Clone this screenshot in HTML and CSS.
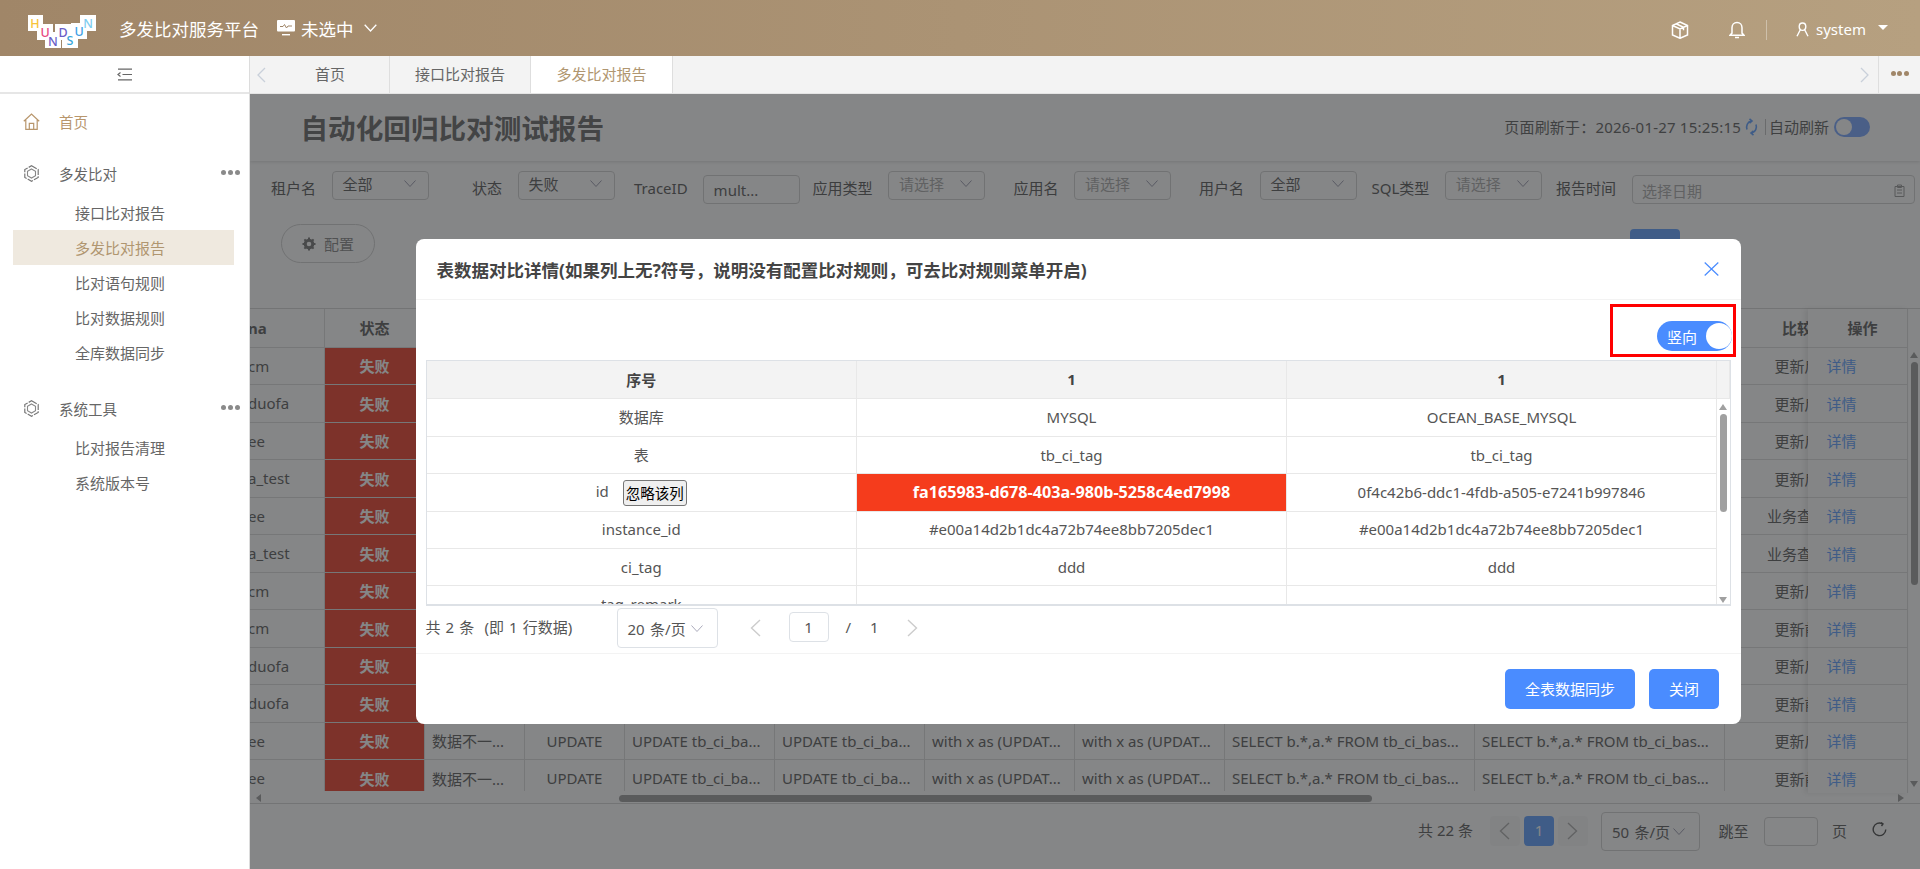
FILE: index.html
```html
<!DOCTYPE html>
<html lang="zh-CN">
<head>
<meta charset="utf-8">
<title>多发比对服务平台</title>
<link rel="stylesheet" href="styles.css">
</head>
<body>
<div class="app">
  <header class="topbar">
    <svg class="logo" viewBox="0 0 68 33" width="68" height="33">
      <g fill="#fff">
        <rect x="0" y="0" width="15" height="16"/><rect x="9" y="9" width="16" height="16"/>
        <rect x="17" y="17" width="16" height="16"/><rect x="27" y="9" width="16" height="16"/>
        <rect x="34" y="17" width="16" height="16"/><rect x="43" y="8" width="16" height="16"/>
        <rect x="52" y="0" width="16" height="16"/>
      </g>
      <g class="logo-l">
        <text x="7" y="12.500" fill="#f8c33a">H</text>
        <text x="17" y="21.500" fill="#e8487f">U</text>
        <text x="25" y="30.500" fill="#6b5fc7" transform="rotate(180 25 26)">N</text>
        <text x="35" y="21.500" fill="#6b5fc7">D</text>
        <text x="42" y="29.500" fill="#39a6d8">S</text>
        <text x="51" y="20.500" fill="#3d9fe6">U</text>
        <text x="60" y="12.500" fill="#7fcdf0">N</text>
      </g>
    </svg>
    <span class="brand">多发比对服务平台</span>
    <svg class="env-ico" viewBox="0 0 18 16" width="18" height="16">
      <rect x="0" y="0" width="18" height="11.5" fill="#fff" rx="1"/>
      <path d="M3 6.500h3l1.500-2 2 3.500 1.500-2h4" fill="none" stroke="#a08668" stroke-width="1"/>
      <rect x="5" y="14" width="8" height="1.400" fill="#fff"/>
    </svg>
    <span class="env">未选中</span>
    <svg class="env-chev" viewBox="0 0 13 8" width="13" height="8"><path d="M.7.7 6.500 7 12.300.7" fill="none" stroke="#fff" stroke-width="1.300"/></svg>
    <div class="top-right">
      <svg viewBox="0 0 18 18" width="18" height="18" class="ti-cube"><path d="M9 1 16.500 4.500V14L9 17.300 1.500 14V4.500ZM1.500 4.500 9 8l7.500-3.500M9 8v9.300M5 2.800 12.500 6.300v3" fill="none" stroke="#fff" stroke-width="1.500"/></svg>
      <svg viewBox="0 0 16 18" width="16" height="18" class="ti-bell"><path d="M8 1.500c-3 0-5 2.200-5 5.200v5.400L1 14.300h14l-2-2.200V6.700c0-3-2-5.200-5-5.200ZM6 16.400h4" fill="none" stroke="#fff" stroke-width="1.500"/></svg>
      <i class="top-sep"></i>
      <svg viewBox="0 0 13 15" width="13" height="15" class="ti-user"><path d="M6.500 1C4.600 1 3.200 2.500 3.200 4.600S4.600 8.400 6.500 8.400 9.800 6.700 9.800 4.600 8.400 1 6.500 1ZM4.200 8 1 14.300M8.800 8 12 14.300" fill="none" stroke="#fff" stroke-width="1.400"/></svg>
      <span class="uname">system</span>
      <i class="caret"></i>
    </div>
  </header>

  <div class="shell">
    <aside class="side">
      <div class="collapse">
        <svg viewBox="0 0 15 13" width="15" height="13"><path d="M1 1.200h14M5.500 6.500H15M1 11.800h14M3.500 4.500 1 6.500l2.500 2" fill="none" stroke="#666" stroke-width="1.200"/></svg>
      </div>
      <nav class="menu">
        <a class="mi home">
          <svg viewBox="0 0 17 17" width="17" height="17"><path d="M.8 8.200 8.500 1l7.700 7.200M2.800 7v9.300h11.400V7M6.300 16.300v-6h4.400v6" fill="none" stroke="#b8966c" stroke-width="1.200"/></svg>
          <span>首页</span>
        </a>
        <div class="group">
          <a class="mi">
            <svg viewBox="0 0 17 17" width="17" height="17"><path d="M8.500.8 15.200 4.600v7.800L8.500 16.200 1.800 12.400V4.600Z" fill="none" stroke="#777" stroke-width="1.200" stroke-dasharray="6 1.200"/><path d="M8.500 4 12.500 6.300v4.400L8.500 13 4.500 10.700V6.300Z" fill="none" stroke="#888" stroke-width="1.100"/></svg>
            <span>多发比对</span>
            <b class="dots"><i></i><i></i><i></i></b>
          </a>
          <a class="sub">接口比对报告</a>
          <a class="sub on">多发比对报告</a>
          <a class="sub">比对语句规则</a>
          <a class="sub">比对数据规则</a>
          <a class="sub">全库数据同步</a>
        </div>
        <div class="group g2">
          <a class="mi">
            <svg viewBox="0 0 17 17" width="17" height="17"><path d="M8.500.8 15.200 4.600v7.800L8.500 16.200 1.800 12.400V4.600Z" fill="none" stroke="#777" stroke-width="1.200" stroke-dasharray="6 1.200"/><path d="M8.500 4 12.500 6.300v4.400L8.500 13 4.500 10.700V6.300Z" fill="none" stroke="#888" stroke-width="1.100"/></svg>
            <span>系统工具</span>
            <b class="dots"><i></i><i></i><i></i></b>
          </a>
          <a class="sub">比对报告清理</a>
          <a class="sub">系统版本号</a>
        </div>
      </nav>
    </aside>

    <main class="main">
      <div class="tabs">
        <span class="tab-arrow"><svg viewBox="0 0 9 16" width="9" height="16"><path d="M8 1 1 8l7 7" fill="none" stroke="#c9d0da" stroke-width="1.300"/></svg></span>
        <a class="tab t1">首页</a>
        <a class="tab t2">接口比对报告</a>
        <a class="tab t3">多发比对报告</a>
        <span class="tab-next"><svg viewBox="0 0 9 16" width="9" height="16"><path d="M1 1l7 7-7 7" fill="none" stroke="#c9d0da" stroke-width="1.300"/></svg></span>
        <span class="tab-more"><i></i><i></i><i></i></span>
      </div>

      <section class="page">
        <div class="title-bar">
          <h1>自动化回归比对测试报告</h1>
          <div class="refresh">
            <span class="ref-time">页面刷新于：2026-01-27 15:25:15</span>
            <svg viewBox="0 0 13 18" width="13" height="18"><path d="M2 11.500C.8 8 2.500 4 6 3M11 6.500C12.200 10 10.500 14 7 15M4.500 .8 7 3 4.500 5.200M8.500 12.800 6 15l2.500 2.200" fill="none" stroke="#79afff" stroke-width="1.600"/></svg>
            <i class="ref-sep"></i>
            <span>自动刷新</span>
            <span class="auto-sw"><i></i></span>
          </div>
        </div>

        <div class="filters">
          <div class="field"><label>租户名</label><span class="sel">全部<svg class="ch" viewBox="0 0 12 7" width="12" height="7"><path d="M.5.500 6 6.500 11.500.5"/></svg></span></div>
          <div class="field"><label>状态</label><span class="sel">失败<svg class="ch" viewBox="0 0 12 7" width="12" height="7"><path d="M.5.500 6 6.500 11.500.5"/></svg></span></div>
          <div class="field"><label>TraceID</label><span class="inp">mult...</span></div>
          <div class="field"><label>应用类型</label><span class="sel ph">请选择<svg class="ch" viewBox="0 0 12 7" width="12" height="7"><path d="M.5.500 6 6.500 11.500.5"/></svg></span></div>
          <div class="field"><label>应用名</label><span class="sel ph">请选择<svg class="ch" viewBox="0 0 12 7" width="12" height="7"><path d="M.5.500 6 6.500 11.500.5"/></svg></span></div>
          <div class="field"><label>用户名</label><span class="sel">全部<svg class="ch" viewBox="0 0 12 7" width="12" height="7"><path d="M.5.500 6 6.500 11.500.5"/></svg></span></div>
          <div class="field"><label>SQL类型</label><span class="sel ph">请选择<svg class="ch" viewBox="0 0 12 7" width="12" height="7"><path d="M.5.500 6 6.500 11.500.5"/></svg></span></div>
          <div class="field"><label>报告时间</label><span class="inp date ph">选择日期<svg viewBox="0 0 11 13" width="11" height="13"><path d="M1 2.500h9v10H1ZM3.500 1h4v2.500h-4ZM3 6h5M3 9h5" fill="none" stroke="#aaa" stroke-width="1"/></svg></span></div>
        </div>

        <div class="actions">
          <span class="cfg"><svg viewBox="0 0 14 14" width="14" height="14"><circle cx="7" cy="7" r="3.800" fill="none" stroke="#8c8c8c" stroke-width="3"/><path d="M7 .5v2M7 11.500v2M.5 7h2M11.500 7h2M2.400 2.400 3.800 3.800M10.200 10.200l1.400 1.400M2.400 11.600l1.400-1.400M10.200 3.800l1.400-1.400" stroke="#8c8c8c" stroke-width="2"/></svg>配置</span>
          <span class="query">查询</span>
        </div>

        <div class="grid-wrap">
          <div class="grid-scroll">
            <table class="grid">
              <colgroup><col class="c1"><col class="c2"><col class="c2"><col class="c2"><col class="c3"><col class="c3"><col class="c3"><col class="c3"><col class="c4"><col class="c4"><col class="c5"></colgroup>
              <thead><tr><th class="lft">na</th><th>状态</th><th>比对结果</th><th>SQL类型</th><th>原始SQL</th><th>比对SQL</th><th>前置SQL</th><th>比对前置SQL</th><th>查询SQL</th><th>比对查询SQL</th><th>比较类型</th></tr></thead>
              <tbody>
                <tr><td class="lft">cm</td><td class="fail">失败</td><td class="l">数据不一...</td><td>UPDATE</td><td class="l">UPDATE tb_ci_ba...</td><td class="l">UPDATE tb_ci_ba...</td><td class="l">with x as (UPDAT...</td><td class="l">with x as (UPDAT...</td><td class="l">SELECT b.*,a.* FROM tb_ci_bas...</td><td class="l">SELECT b.*,a.* FROM tb_ci_bas...</td><td>更新后数据</td></tr>
                <tr><td class="lft">duofa</td><td class="fail">失败</td><td class="l">数据不一...</td><td>UPDATE</td><td class="l">UPDATE tb_ci_ba...</td><td class="l">UPDATE tb_ci_ba...</td><td class="l">with x as (UPDAT...</td><td class="l">with x as (UPDAT...</td><td class="l">SELECT b.*,a.* FROM tb_ci_bas...</td><td class="l">SELECT b.*,a.* FROM tb_ci_bas...</td><td>更新后数据</td></tr>
                <tr><td class="lft">ee</td><td class="fail">失败</td><td class="l">数据不一...</td><td>UPDATE</td><td class="l">UPDATE tb_ci_ba...</td><td class="l">UPDATE tb_ci_ba...</td><td class="l">with x as (UPDAT...</td><td class="l">with x as (UPDAT...</td><td class="l">SELECT b.*,a.* FROM tb_ci_bas...</td><td class="l">SELECT b.*,a.* FROM tb_ci_bas...</td><td>更新后数据</td></tr>
                <tr><td class="lft">a_test</td><td class="fail">失败</td><td class="l">数据不一...</td><td>UPDATE</td><td class="l">UPDATE tb_ci_ba...</td><td class="l">UPDATE tb_ci_ba...</td><td class="l">with x as (UPDAT...</td><td class="l">with x as (UPDAT...</td><td class="l">SELECT b.*,a.* FROM tb_ci_bas...</td><td class="l">SELECT b.*,a.* FROM tb_ci_bas...</td><td>更新后数据</td></tr>
                <tr><td class="lft">ee</td><td class="fail">失败</td><td class="l">数据不一...</td><td>SELECT</td><td class="l">SELECT * FROM tb...</td><td class="l">SELECT * FROM tb...</td><td class="l">-</td><td class="l">-</td><td class="l">SELECT b.*,a.* FROM tb_ci_bas...</td><td class="l">SELECT b.*,a.* FROM tb_ci_bas...</td><td>业务查询数据</td></tr>
                <tr><td class="lft">a_test</td><td class="fail">失败</td><td class="l">数据不一...</td><td>SELECT</td><td class="l">SELECT * FROM tb...</td><td class="l">SELECT * FROM tb...</td><td class="l">-</td><td class="l">-</td><td class="l">SELECT b.*,a.* FROM tb_ci_bas...</td><td class="l">SELECT b.*,a.* FROM tb_ci_bas...</td><td>业务查询数据</td></tr>
                <tr><td class="lft">cm</td><td class="fail">失败</td><td class="l">数据不一...</td><td>UPDATE</td><td class="l">UPDATE tb_ci_ba...</td><td class="l">UPDATE tb_ci_ba...</td><td class="l">with x as (UPDAT...</td><td class="l">with x as (UPDAT...</td><td class="l">SELECT b.*,a.* FROM tb_ci_bas...</td><td class="l">SELECT b.*,a.* FROM tb_ci_bas...</td><td>更新后数据</td></tr>
                <tr><td class="lft">cm</td><td class="fail">失败</td><td class="l">数据不一...</td><td>UPDATE</td><td class="l">UPDATE tb_ci_ba...</td><td class="l">UPDATE tb_ci_ba...</td><td class="l">with x as (UPDAT...</td><td class="l">with x as (UPDAT...</td><td class="l">SELECT b.*,a.* FROM tb_ci_bas...</td><td class="l">SELECT b.*,a.* FROM tb_ci_bas...</td><td>更新前数据</td></tr>
                <tr><td class="lft">duofa</td><td class="fail">失败</td><td class="l">数据不一...</td><td>UPDATE</td><td class="l">UPDATE tb_ci_ba...</td><td class="l">UPDATE tb_ci_ba...</td><td class="l">with x as (UPDAT...</td><td class="l">with x as (UPDAT...</td><td class="l">SELECT b.*,a.* FROM tb_ci_bas...</td><td class="l">SELECT b.*,a.* FROM tb_ci_bas...</td><td>更新后数据</td></tr>
                <tr><td class="lft">duofa</td><td class="fail">失败</td><td class="l">数据不一...</td><td>UPDATE</td><td class="l">UPDATE tb_ci_ba...</td><td class="l">UPDATE tb_ci_ba...</td><td class="l">with x as (UPDAT...</td><td class="l">with x as (UPDAT...</td><td class="l">SELECT b.*,a.* FROM tb_ci_bas...</td><td class="l">SELECT b.*,a.* FROM tb_ci_bas...</td><td>更新前数据</td></tr>
                <tr><td class="lft">ee</td><td class="fail">失败</td><td class="l">数据不一...</td><td>UPDATE</td><td class="l">UPDATE tb_ci_ba...</td><td class="l">UPDATE tb_ci_ba...</td><td class="l">with x as (UPDAT...</td><td class="l">with x as (UPDAT...</td><td class="l">SELECT b.*,a.* FROM tb_ci_bas...</td><td class="l">SELECT b.*,a.* FROM tb_ci_bas...</td><td>更新后数据</td></tr>
                <tr><td class="lft">ee</td><td class="fail">失败</td><td class="l">数据不一...</td><td>UPDATE</td><td class="l">UPDATE tb_ci_ba...</td><td class="l">UPDATE tb_ci_ba...</td><td class="l">with x as (UPDAT...</td><td class="l">with x as (UPDAT...</td><td class="l">SELECT b.*,a.* FROM tb_ci_bas...</td><td class="l">SELECT b.*,a.* FROM tb_ci_bas...</td><td>更新前数据</td></tr>
              </tbody>
            </table>
          </div>
          <div class="grid-fixed">
            <table class="grid ops">
              <thead><tr><th>操作</th></tr></thead>
              <tbody>
                <tr><td><a>详情</a></td></tr><tr><td><a>详情</a></td></tr><tr><td><a>详情</a></td></tr><tr><td><a>详情</a></td></tr>
                <tr><td><a>详情</a></td></tr><tr><td><a>详情</a></td></tr><tr><td><a>详情</a></td></tr><tr><td><a>详情</a></td></tr>
                <tr><td><a>详情</a></td></tr><tr><td><a>详情</a></td></tr><tr><td><a>详情</a></td></tr><tr><td><a>详情</a></td></tr>
              </tbody>
            </table>
          </div>
          <div class="vbar">
            <i class="up"></i><i class="thumb"></i><i class="down"></i>
          </div>
        </div>
        <div class="hbar"><i class="la"></i><i class="hthumb"></i><i class="ra"></i></div>

        <div class="pager">
          <span class="total">共 22 条</span>
          <span class="pg"><svg viewBox="0 0 11 18" width="11" height="18"><path d="M10 1 1.500 9l8.500 8" fill="none" stroke="#bbb" stroke-width="1.400"/></svg></span>
          <span class="pg cur">1</span>
          <span class="pg"><svg viewBox="0 0 11 18" width="11" height="18"><path d="M1 1l8.500 8L1 17" fill="none" stroke="#bbb" stroke-width="1.400"/></svg></span>
          <span class="psel">50 条/页<svg viewBox="0 0 12 7" width="12" height="7" class="ch"><path d="M.5.500 6 6.500 11.500.5"/></svg></span>
          <span class="jump">跳至</span>
          <span class="jinp"></span>
          <span class="jpage">页</span>
          <svg class="reload" viewBox="0 0 15 15" width="15" height="15"><path d="M10.500 1.800A6.300 6.300 0 1 0 13.800 7.500M9 .5l2 1.500-1.500 2" fill="none" stroke="#666" stroke-width="1.400"/></svg>
        </div>

        <div class="overlay">
          <div class="modal">
            <div class="m-head">
              <span class="m-title">表数据对比详情(如果列上无?符号，说明没有配置比对规则，可去比对规则菜单开启)</span>
              <svg viewBox="0 0 15 14" width="15" height="14"><path d="M.7.5 14.300 13.500M14.300.5.700 13.500" stroke="#4a8cff" stroke-width="1.200" fill="none"/></svg>
            </div>
            <div class="m-body">
              <div class="m-tool">
                <div class="mark"><span class="v-sw"><span>竖向</span><i></i></span></div>
              </div>
              <div class="dt">
                <table class="dtt head">
                  <colgroup><col class="d1"><col class="d1"><col class="d1"><col class="ds"></colgroup>
                  <tr><th>序号</th><th>1</th><th>1</th><th></th></tr>
                </table>
                <div class="dt-body">
                  <table class="dtt rows">
                    <colgroup><col class="d1"><col class="d1"><col class="d1"></colgroup>
                    <tr><td>数据库</td><td>MYSQL</td><td>OCEAN_BASE_MYSQL</td></tr>
                    <tr><td>表</td><td>tb_ci_tag</td><td>tb_ci_tag</td></tr>
                    <tr><td class="idc">id <button class="ign">忽略该列</button></td><td class="diff">fa165983-d678-403a-980b-5258c4ed7998</td><td>0f4c42b6-ddc1-4fdb-a505-e7241b997846</td></tr>
                    <tr><td>instance_id</td><td>#e00a14d2b1dc4a72b74ee8bb7205dec1</td><td>#e00a14d2b1dc4a72b74ee8bb7205dec1</td></tr>
                    <tr><td>ci_tag</td><td>ddd</td><td>ddd</td></tr>
                    <tr><td>tag_remark</td><td></td><td></td></tr>
                  </table>
                  <div class="dt-bar"><i class="up"></i><i class="thumb"></i><i class="down"></i></div>
                </div>
              </div>
              <div class="m-pager">
                <span class="mp-total">共 2 条&nbsp; (即 1 行数据)</span>
                <span class="mp-sel">20 条/页<svg viewBox="0 0 12 7" width="12" height="7" class="ch"><path d="M.5.500 6 6.500 11.500.5"/></svg></span>
                <svg class="mp-prev" viewBox="0 0 11 18" width="11" height="18"><path d="M10 1 1.500 9l8.500 8" fill="none" stroke="#ccc" stroke-width="1.400"/></svg>
                <span class="mp-inp">1</span>
                <span class="mp-sl">/</span>
                <span class="mp-n">1</span>
                <svg class="mp-next" viewBox="0 0 11 18" width="11" height="18"><path d="M1 1l8.500 8L1 17" fill="none" stroke="#ccc" stroke-width="1.400"/></svg>
              </div>
            </div>
            <div class="m-foot">
              <button class="btn wide">全表数据同步</button>
              <button class="btn">关闭</button>
            </div>
          </div>
        </div>
      </section>
    </main>
  </div>
</div>
</body>
</html>
```

FILE: styles.css
```css
* { box-sizing: border-box; }
html, body { margin: 0; height: 100%; overflow: hidden; }
body {
  font-family: "Noto Sans", "Noto Sans CJK SC", sans-serif;
  font-size: 15px;
  color: #555;
  background: #fff;
}
i, b { display: block; font-style: normal; }
.app { width: 1920px; height: 869px; display: flex; flex-direction: column; }

/* top bar */
.topbar {
  height: 56px;
  flex: none;
  display: flex;
  align-items: center;
  padding: 0 32px 0 28px;
  color: #fff;
  background: linear-gradient(90deg, #a08668, #b6a080);
}
.logo { flex: none; margin-top: 7px; }
.logo-l text { font: 500 12.5px "Noto Sans", sans-serif; text-anchor: middle; }
.brand { margin-left: 23px; font-size: 17.5px; white-space: nowrap; }
.env-ico { margin-left: 18px; flex: none; }
.env { margin-left: 6px; font-size: 17.5px; }
.env-chev { margin-left: 10px; }
.top-right { margin-left: auto; display: flex; align-items: center; margin-top: 3px; }
.ti-bell { margin-left: 40px; }
.top-sep { width: 1px; height: 20px; background: rgba(255, 255, 255, .35); margin: 0 29px 0 21px; }
.uname { margin-left: 7px; font-size: 15px; line-height: 18px; width: 49px; margin-top: -2px; }
.caret { margin-left: 13px; width: 0; height: 0; border: 5px solid transparent; border-top: 5px solid #fff; border-bottom: 0; margin-top: -5px; }

.shell { flex: 1; display: flex; min-height: 0; }

/* sidebar */
.side { width: 250px; flex: none; border-right: 1px solid #dcdcdc; }
.collapse {
  height: 38px;
  border-bottom: 2px solid #e6e6e6;
  display: flex;
  align-items: center;
  justify-content: center;
  padding-right: 1px;
}
.menu { padding: 10px 15px 0 13px; }
.mi { height: 34px; display: flex; align-items: center; padding-left: 10px; color: #666; }
.mi span { margin-left: 19px; font-size: 14.5px; }
.mi.home span { color: #b8966c; }
.group { margin-top: 18px; }
.group.g2 { margin-top: 22px; }
.dots { margin-left: auto; margin-right: -6px; display: flex; gap: 2px; margin-top: -2px; }
.dots i, .tab-more i { width: 5px; height: 5px; border-radius: 50%; background: #8a8a8a; }
.sub { height: 35px; display: flex; align-items: center; padding-left: 62px; color: #666; font-size: 15px; white-space: nowrap; }
.group > .mi + .sub { margin-top: 4.5px; }
.sub.on { background: #efe9df; color: #b09670; }

/* tabs */
.main { flex: 1; min-width: 0; display: flex; flex-direction: column; }
.tabs { height: 38px; flex: none; display: flex; align-items: center; background: #f3f3f3; border-bottom: 1px solid #e4e4e4; }
.tab-arrow { width: 21px; height: 100%; display: flex; align-items: center; padding-left: 7px; }
.tab {
  height: 100%;
  display: flex;
  align-items: center;
  justify-content: center;
  padding-bottom: 2px;
  border-right: 1px solid #dedede;
  color: #666;
  white-space: nowrap;
}
.t1 { width: 119px; }
.t2 { width: 141px; }
.t3 { width: 142px; background: #fff; color: #b09670; }
.tab-next { margin-left: auto; width: 18px; display: flex; align-items: center; }
.tab-more { width: 42px; height: 100%; border-left: 1px solid #dedede; display: flex; align-items: center; justify-content: center; gap: 1.5px; padding-bottom: 2px; }
.tab-more i { background: #a08668; }

/* page under the dialog mask */
.page { flex: 1; position: relative; min-height: 0; background: #fff; color: #777; overflow: hidden; }
.title-bar {
  height: 67px;
  display: flex;
  align-items: center;
  padding: 0 50px 2px 50.5px;
  box-shadow: 0 1px 3px rgba(0, 0, 0, .12);
}
.title-bar h1 { margin: 0; font-size: 27.6px; font-weight: 700; color: #808080; white-space: nowrap; }
.refresh { margin-left: auto; display: flex; align-items: center; white-space: nowrap; color: #7a7a7a; }
.ref-time { letter-spacing: .2px; }
.refresh svg { margin-left: 4px; }
.ref-sep { width: 1px; height: 16px; background: #ccc; margin: 0 3px 0 7px; }
.auto-sw { margin-left: 5px; width: 36px; height: 20px; border-radius: 10px; background: #8fb5ff; display: flex; align-items: center; padding-left: 2px; }
.auto-sw i { width: 16px; height: 16px; border-radius: 50%; background: #fff; }

.filters {
  display: grid;
  grid-template-columns: 201px 162px 178.5px 201px 185.5px 172.5px 184.5px 359px;
  padding: 10px 0 0 21px;
  height: 43px;
}
.field { display: flex; align-items: center; gap: 15.5px; height: 33px; }
.field label { white-space: nowrap; color: #737373; }
.sel {
  align-self: flex-start;
  width: 97px;
  height: 28.5px;
  border: 1px solid #d8d8d8;
  border-radius: 4px;
  display: flex;
  align-items: center;
  padding: 0 0 3px 10px;
  white-space: nowrap;
}
.ch { fill: none; stroke: #aab; stroke-width: 1; flex: none; }
.sel .ch { margin-left: auto; margin-right: 12px; }
.ph { color: #b8b8b8; }
.inp {
  align-self: flex-end;
  width: 97px;
  height: 29px;
  border: 1px solid #d8d8d8;
  border-radius: 4px;
  display: flex;
  align-items: center;
  padding: 1px 0 0 9.5px;
}
.inp.date { flex: 1; width: auto; justify-content: space-between; padding-right: 9px; }

.actions { margin-top: 20px; height: 84px; display: flex; align-items: flex-start; padding: 0 240px 0 31px; justify-content: space-between; }
.cfg {
  width: 94px;
  height: 39px;
  border: 1px solid #d8d8d8;
  border-radius: 20px;
  display: flex;
  align-items: center;
  justify-content: center;
  gap: 8px;
  color: #9a9a9a;
}
.query {
  margin-top: 5px;
  width: 50px;
  height: 34px;
  border-radius: 4px;
  background: #79afff;
  color: #fff;
  display: flex;
  align-items: center;
  justify-content: center;
}

/* background result table */
.grid-wrap { height: 486px; display: flex; border-top: 1px solid #dcdcdc; }
.grid-scroll { flex: 1; min-width: 0; height: 482px; overflow: hidden; }
.grid { border-collapse: collapse; table-layout: fixed; width: 1649.5px; }
.c1 { width: 74.5px; }
.c2 { width: 100px; }
.c3 { width: 150px; }
.c4 { width: 250px; }
.c5 { width: 175px; }
.grid th, .grid td {
  border-bottom: 1px solid #e3e3e3;
  border-right: 1px solid #e3e3e3;
  text-align: center;
  white-space: nowrap;
  overflow: hidden;
  padding: 0;
  height: 37.5px;
  color: #777;
}
.grid th { height: 38px; font-weight: 700; }
.grid td.l { text-align: left; padding-left: 7px; }
.grid .lft { text-align: left; text-indent: -2px; }
.grid td.fail { background: #f05f4e; color: #fff; font-weight: 700; }
.grid-fixed { width: 100px; flex: none; height: 484px; box-shadow: -3px 0 5px rgba(0, 0, 0, .08); overflow: hidden; background: #fdfdfd; }
.grid.ops { width: 100px; }
.grid.ops th { padding-left: 10px; }
.grid.ops td { text-align: left; padding-left: 18.5px; }
.grid.ops a { color: #79afff; }
.vbar { width: 12px; flex: none; display: flex; flex-direction: column; align-items: center; padding-top: 43px; }
.vbar .thumb, .dt-bar .thumb { background: #adadad; border-radius: 4px; width: 7px; }
.vbar .thumb { height: 223px; margin: 4px 0 196px; }
.up { width: 8px; height: 6px; border: 4px solid transparent; border-bottom: 6px solid #adadad; border-top: 0; }
.down { width: 8px; height: 6px; border: 4px solid transparent; border-top: 6px solid #adadad; border-bottom: 0; }
.hbar { height: 10px; display: flex; align-items: center; border-bottom: 1px solid #dcdcdc; padding: 0 16px 1px 6px; }
.hthumb { width: 753px; height: 7px; background: #adadad; border-radius: 4px; margin-left: 358px; }
.la { width: 0; height: 0; border: 4px solid transparent; border-right: 5px solid #adadad; border-left: 0; }
.ra { margin-left: auto; width: 0; height: 0; border: 4px solid transparent; border-left: 6px solid #adadad; border-right: 0; }

.pager { height: 54px; display: flex; align-items: center; justify-content: flex-end; padding-right: 33px; }
.total { margin: -3px 17px 0 0; }
.pg { width: 30px; height: 30px; border-radius: 4px; background: #fafafa; margin-right: 4px; display: flex; align-items: center; justify-content: center; }
.pg.cur { background: #79afff; color: #fff; padding-bottom: 2px; }
.psel { margin-left: 9px; width: 99px; height: 39px; border: 1px solid #d8d8d8; border-radius: 4px; display: flex; align-items: center; padding-left: 10px; white-space: nowrap; gap: 3px; word-spacing: 1.5px; }
.jump { margin-left: 18.5px; margin-top: -2px; }
.jinp { margin-left: 15.5px; width: 54px; height: 29px; border: 1px solid #d8d8d8; border-radius: 4px; }
.jpage { margin-left: 14px; margin-top: -2px; }
.reload { margin-left: 25px; margin-top: -4px; }

/* dialog mask */
.overlay { position: absolute; inset: 0; background: rgba(0, 2, 4, .48); padding: 145px 0 0 166px; }
.modal { width: 1325px; height: 485px; background: #fff; border-radius: 8px; display: flex; flex-direction: column; color: #555; }
.m-head {
  height: 61px;
  flex: none;
  display: flex;
  align-items: center;
  justify-content: space-between;
  padding: 0 22.5px 0 20.5px;
  border-bottom: 1px solid #f3f3f3;
}
.m-title { font-size: 17.5px; font-weight: 700; color: #444; white-space: nowrap; }
.m-body { flex: 1; min-height: 0; padding: 0 9.5px; }
.m-tool { height: 60px; display: flex; justify-content: flex-end; padding-top: 4px; margin-right: -4.5px; }
.mark { width: 126px; height: 53px; border: 3px solid #f00; display: flex; justify-content: flex-end; align-items: center; padding: 11px 1px 0 0; }
.v-sw { width: 75px; height: 30px; border-radius: 15px; background: #4a8cff; color: #fff; display: flex; align-items: center; padding: 0 0 0 10px; justify-content: space-between; }
.v-sw i { width: 26px; height: 26px; border-radius: 50%; background: #fff; }
.dt { width: 1305px; height: 245.5px; border: 1px solid #dde1e6; border-bottom-width: 2px; overflow: hidden; }
.dtt { border-collapse: collapse; table-layout: fixed; }
.dtt.head { width: 1303px; }
.dtt.rows { width: 1289px; flex: none; align-self: flex-start; }
.d1 { width: 430px; }
.ds { width: 13px; }
.dtt th, .dtt td { border-right: 1px solid #e8e8e8; border-bottom: 1px solid #e8e8e8; text-align: center; white-space: nowrap; padding: 0 0 1px; }
.dtt th { height: 37.5px; background: #f3f3f3; font-weight: 700; color: #444; }
.dtt td { height: 37.4px; }
.dtt td.idc { padding: 1px 0 0; }
.dtt td.diff { background: #f53c1c; color: #fff; font-weight: 700; font-size: 16.2px; }
.ign {
  margin-left: 10px;
  height: 25.5px;
  width: 64px;
  padding: 0;
  font: 14.5px "Noto Sans CJK SC", sans-serif;
  color: #000;
  background: #efefef;
  border: 1px solid #767676;
  border-radius: 3px;
  vertical-align: middle;
}
.dt-body { height: 207px; overflow: hidden; display: flex; }
.dt-bar { flex: 1; display: flex; flex-direction: column; align-items: center; padding-top: 5px; }
.dt-bar .thumb { height: 98px; margin: 4px 0 85px; background: #a0a0a0; flex: none; }
.dt-bar .up { border-bottom-color: #a0a0a0; }
.dt-bar .down { border-top-color: #a0a0a0; }
.m-pager { height: 48px; display: flex; align-items: center; padding-bottom: 3px; }
.mp-total { width: 191px; white-space: nowrap; margin-top: -3px; word-spacing: 1.2px; }
.mp-sel { width: 101px; height: 40px; border: 1px solid #dde1e6; border-radius: 4px; display: flex; align-items: center; padding-left: 10px; gap: 5px; white-space: nowrap; word-spacing: 1.5px; }
.mp-prev { margin-left: 32px; }
.mp-inp { margin-left: 28px; width: 40px; height: 30px; border: 1px solid #dde1e6; border-radius: 4px; display: flex; align-items: center; justify-content: center; margin-top: -3px; }
.mp-sl { margin-left: 17px; margin-top: -3px; }
.mp-n { margin-left: 19px; margin-top: -3px; }
.mp-next { margin-left: 28px; }
.m-foot { height: 71px; flex: none; border-top: 1px solid #f3f3f3; display: flex; justify-content: flex-end; align-items: center; gap: 14px; padding: 0 22px 1px 0; }
.btn { height: 40px; width: 70px; border: 0; border-radius: 5px; background: #4a8cff; color: #fff; font: 15px "Noto Sans CJK SC", sans-serif; }
.btn.wide { width: 130px; }
```
